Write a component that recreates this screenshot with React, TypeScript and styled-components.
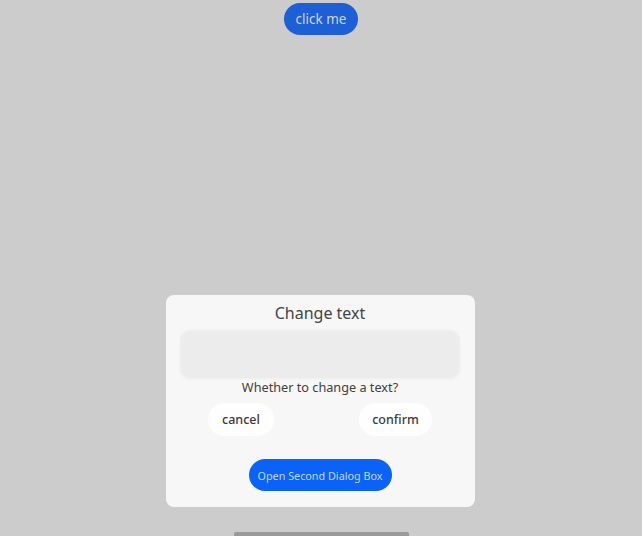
import React from 'react'
import styled, { createGlobalStyle } from 'styled-components'

const GlobalStyle = createGlobalStyle`
	html, body {
		margin: 0;
		padding: 0;
		background: #cccccc;
		font-family: "Noto Sans", "Open Sans", sans-serif;
	}
`

const Page = styled.div`
	display: flex;
	flex-direction: column;
	align-items: center;
	justify-content: space-between;
	width: 642px;
	height: 536px;
	background: #cccccc;
	overflow: hidden;
`

const ClickButton = styled.button`
	margin-top: 3px;
	width: 74px;
	height: 32px;
	border: none;
	border-radius: 16px;
	background: #1d5fd5;
	color: #cdd7ec;
	font-family: inherit;
	font-size: 13.5px;
	padding: 0;
`

const HomeBar = styled.div`
	width: 175px;
	height: 4px;
	background: #9a9a9a;
	border-radius: 2px 2px 0 0;
`

const Overlay = styled.div`
	position: fixed;
	inset: 0;
	display: flex;
	justify-content: center;
	align-items: flex-end;
	padding: 0 2px 29px 0;
	box-sizing: border-box;
`

const Dialog = styled.div`
	width: 309px;
	height: 212px;
	box-sizing: border-box;
	background: #f7f7f7;
	border-radius: 8px;
	display: flex;
	flex-direction: column;
	align-items: center;
	padding: 6px 0 16px;
`

const Title = styled.div`
	font-size: 16px;
	line-height: 24px;
	color: #444444;
`

const InputField = styled.div`
	margin-top: 6px;
	width: 278px;
	height: 47px;
	background: #ececec;
	border-radius: 10px;
	box-shadow: 0 0 3px 1px #ececec;
`

const Question = styled.div`
	font-size: 12.7px;
	line-height: 18px;
	color: #404040;
`

const ButtonRow = styled.div`
	display: flex;
	justify-content: space-around;
	width: 100%;
	margin-top: 7px;
`

const TextButton = styled.button<{ $w: number }>`
	width: ${p => p.$w}px;
	height: 33px;
	border: none;
	border-radius: 17px;
	background: #fefefe;
	color: #3a3a3a;
	font-family: inherit;
	font-size: 12.5px;
	font-weight: 500;
	padding: 0;
`

const OpenButton = styled.button`
	margin-top: auto;
	width: 143px;
	height: 32px;
	border: none;
	border-radius: 16px;
	background: #0a62f6;
	color: #c4d8fb;
	font-family: inherit;
	font-size: 10.8px;
	padding: 0;
`

export default function App() {
	return (
		<>
			<GlobalStyle />
			<Page>
				<ClickButton>click me</ClickButton>
				<HomeBar />
			</Page>
			<Overlay>
				<Dialog>
					<Title>Change text</Title>
					<InputField />
					<Question>Whether to change a text?</Question>
					<ButtonRow>
						<TextButton $w={66}>cancel</TextButton>
						<TextButton $w={73}>confirm</TextButton>
					</ButtonRow>
					<OpenButton>Open Second Dialog Box</OpenButton>
				</Dialog>
			</Overlay>
		</>
	)
}
